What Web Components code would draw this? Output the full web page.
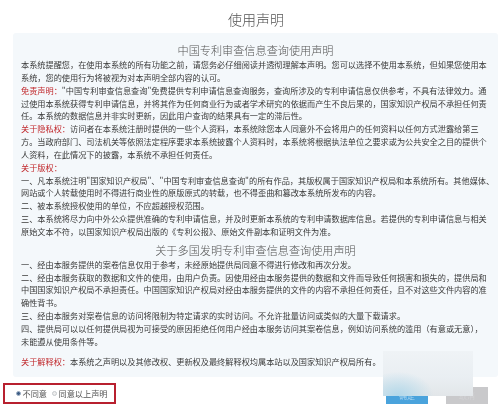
<!DOCTYPE html>
<html lang="zh"><head><meta charset="utf-8">
<style>
html,body{margin:0;padding:0;background:#fff;width:500px;height:406px;overflow:hidden}
</style></head><body>
<template id="page-t"><style>
:host{display:block;width:500px;height:406px;position:relative;overflow:hidden;font-family:"Noto Sans CJK SC","Noto Sans",sans-serif;filter:blur(.4px)}
h1{margin:0;height:33px;padding-left:12px;font-weight:300;font-size:14px;line-height:38px;text-align:center;color:#555}
.foot{display:flex;justify-content:space-between;align-items:flex-start;padding:5px 12px 0 3px}
.btns{display:flex;gap:18px;padding-top:5px}
</style>
<h1>使用声明</h1>
<slot></slot>
<div class="foot"><slot name="agree"></slot><div class="btns"><slot name="btn"></slot></div></div>
<slot name="mark"></slot>
</template>

<template id="panel-t"><style>
:host{display:block;margin:0 2px 0 13px;height:344px;box-sizing:border-box;background:#f4f8fb;border-radius:3px;padding:9px 8px 0 8px;color:#3a3a3a;font-size:8.18px;line-height:12.85px}
</style><slot></slot></template>

<template id="head-t"><style>
:host{display:block;text-align:center;font-size:11.15px;font-weight:300;color:#555;line-height:16px;margin-bottom:1px}
:host([second]){margin:3.5px 0 .4px}
</style><slot></slot></template>

<template id="para-t"><style>
:host{display:block;white-space:nowrap}
::slotted([slot=lead]){color:#c0282c}
</style><slot name="lead"></slot><slot></slot></template>

<template id="radio-t"><style>
:host{display:inline-flex;align-items:center;gap:1.5px;font-size:8.18px;color:#555;white-space:nowrap}
i{width:5px;height:5px;border-radius:50%;box-sizing:border-box;border:1px solid #c4c8cc;background:#eee}
:host([checked]) i{background:#3c5c84;border-color:#9fb0c4}
</style><i></i><slot></slot></template>

<template id="agree-t"><style>
:host{display:flex;align-items:center;gap:5px;box-sizing:border-box;width:113px;height:21px;margin-top:.5px;border:2px solid #b8202f;padding-left:11px}
</style><slot></slot></template>

<template id="btn-t"><style>
:host{display:flex;align-items:center;justify-content:center;width:42px;height:17px;background:var(--c);color:var(--t);font-size:8px;line-height:1}
</style><slot></slot></template>

<template id="mark-t"><style>
:host{display:block;position:absolute;left:383px;top:351px;width:90px;height:45px;background:linear-gradient(180deg,#eff3f6 0,#e9eef2 60%,#e2e6e9 100%)}
div{position:absolute;left:0;bottom:0;width:50px;height:24px;background:radial-gradient(ellipse at 30% 100%,#b2d8ea,rgba(200,228,240,0) 72%)}
</style><div></div></template>

<patent-page>
<legal-panel>
<legal-head>中国专利审查信息查询使用声明</legal-head>
<legal-para>本系统提醒您，在使用本系统的所有功能之前，请您务必仔细阅读并透彻理解本声明。您可以选择不使用本系统，但如果您使用本</legal-para>
<legal-para>系统，您的使用行为将被视为对本声明全部内容的认可。</legal-para>
<legal-para><span slot="lead">免责声明：</span>"中国专利审查信息查询"免费提供专利申请信息查询服务，查询所涉及的专利申请信息仅供参考，不具有法律效力。通</legal-para>
<legal-para>过使用本系统获得专利申请信息，并将其作为任何商业行为或者学术研究的依据而产生不良后果的，国家知识产权局不承担任何责</legal-para>
<legal-para>任。本系统的数据信息并非实时更新，因此用户查询的结果具有一定的滞后性。</legal-para>
<legal-para><span slot="lead">关于隐私权：</span>访问者在本系统注册时提供的一些个人资料，本系统除您本人同意外不会将用户的任何资料以任何方式泄露给第三</legal-para>
<legal-para>方。当政府部门、司法机关等依照法定程序要求本系统披露个人资料时，本系统将根据执法单位之要求或为公共安全之目的提供个</legal-para>
<legal-para>人资料，在此情况下的披露，本系统不承担任何责任。</legal-para>
<legal-para><span slot="lead">关于版权：</span></legal-para>
<legal-para>一、凡本系统注明"国家知识产权局"、"中国专利审查信息查询"的所有作品，其版权属于国家知识产权局和本系统所有。其他媒体、</legal-para>
<legal-para>网站或个人转载使用时不得进行商业性的原版原式的转载，也不得歪曲和篡改本系统所发布的内容。</legal-para>
<legal-para>二、被本系统授权使用的单位，不应超越授权范围。</legal-para>
<legal-para>三、本系统将尽力向中外公众提供准确的专利申请信息，并及时更新本系统的专利申请数据库信息。若提供的专利申请信息与相关</legal-para>
<legal-para>原始文本不符，以国家知识产权局出版的《专利公报》、原始文件副本和证明文件为准。</legal-para>
<legal-head second>关于多国发明专利审查信息查询使用声明</legal-head>
<legal-para>一、经由本服务提供的案卷信息仅用于参考，未经原始提供局同意不得进行修改和再次分发。</legal-para>
<legal-para>二、经由本服务获取的数据和文件的使用，由用户负责。因使用经由本服务提供的数据和文件而导致任何损害和损失的，提供局和</legal-para>
<legal-para>中国国家知识产权局不承担责任。中国国家知识产权局对经由本服务提供的文件的内容不承担任何责任，且不对这些文件内容的准</legal-para>
<legal-para>确性背书。</legal-para>
<legal-para>三、经由本服务对案卷信息的访问将限制为特定请求的实时访问。不允许批量访问或类似的大量下载请求。</legal-para>
<legal-para>四、提供局可以以任何提供局视为可接受的原因拒绝任何用户经由本服务访问其案卷信息，例如访问系统的滥用（有意或无意），</legal-para>
<legal-para>未能遵从使用条件等。</legal-para>
<legal-para style="margin-top:7.6px"><span slot="lead">关于解释权：</span>本系统之声明以及其修改权、更新权及最终解释权均属本站以及国家知识产权局所有。</legal-para>
</legal-panel>
<agree-box slot="agree"><radio-opt checked>不同意</radio-opt><radio-opt>同意以上声明</radio-opt></agree-box>
<action-btn slot="btn" style="--c:#4aa3dc;--t:#a9d4ef">确定</action-btn>
<action-btn slot="btn" style="--c:#c9c9cb;--t:#d2d2d4">取消</action-btn>
<water-mark slot="mark"></water-mark>
</patent-page>
<script>
const def=(n,t)=>customElements.define(n,class extends HTMLElement{constructor(){super();this.attachShadow({mode:'open'}).appendChild(document.getElementById(t).content.cloneNode(true))}});
def('patent-page','page-t');def('legal-panel','panel-t');def('legal-head','head-t');def('legal-para','para-t');def('radio-opt','radio-t');def('agree-box','agree-t');def('action-btn','btn-t');def('water-mark','mark-t');
</script>
</body></html>
